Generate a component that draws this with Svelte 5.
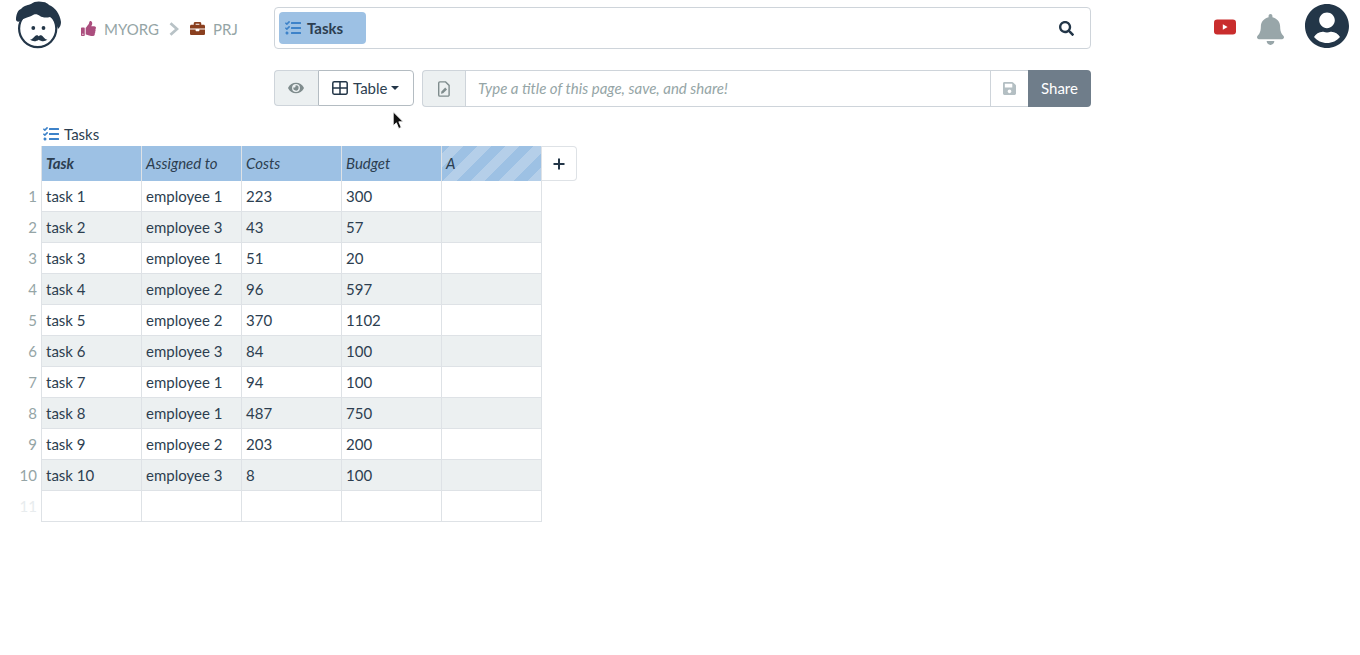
<script>
  const rows = [
    ['task 1', 'employee 1', '223', '300'],
    ['task 2', 'employee 3', '43', '57'],
    ['task 3', 'employee 1', '51', '20'],
    ['task 4', 'employee 2', '96', '597'],
    ['task 5', 'employee 2', '370', '1102'],
    ['task 6', 'employee 3', '84', '100'],
    ['task 7', 'employee 1', '94', '100'],
    ['task 8', 'employee 1', '487', '750'],
    ['task 9', 'employee 2', '203', '200'],
    ['task 10', 'employee 3', '8', '100'],
    ['', '', '', '']
  ];
  const tasks = 'M139.61 35.5a12 12 0 0 0-17 0L58.93 98.81l-22.7-22.12a12 12 0 0 0-17 0L3.53 92.41a12 12 0 0 0 0 17l47.59 47.4a12.78 12.78 0 0 0 17.61 0l15.59-15.62L156.52 69a12.09 12.09 0 0 0 .09-17zm0 159.19a12 12 0 0 0-17 0l-63.68 63.72-22.7-22.1a12 12 0 0 0-17 0L3.53 252a12 12 0 0 0 0 17L51 316.5a12.77 12.77 0 0 0 17.6 0l15.7-15.69 72.2-72.22a12 12 0 0 0 .09-16.9zM64 368c-26.49 0-48.59 21.5-48.59 48S37.53 464 64 464a48 48 0 0 0 0-96zm432 16H208a16 16 0 0 0-16 16v32a16 16 0 0 0 16 16h288a16 16 0 0 0 16-16v-32a16 16 0 0 0-16-16zm0-320H208a16 16 0 0 0-16 16v32a16 16 0 0 0 16 16h288a16 16 0 0 0 16-16V80a16 16 0 0 0-16-16zm0 160H208a16 16 0 0 0-16 16v32a16 16 0 0 0 16 16h288a16 16 0 0 0 16-16v-32a16 16 0 0 0-16-16z';
</script>

<div class="page">
  <header class="top">
    <div class="brand">
      <svg class="logo" viewBox="0 0 46 48" width="46" height="48">
        <circle cx="21.7" cy="27.6" r="18.6" fill="#fff" stroke="#233648" stroke-width="2.2" />
        <path d="M0 19C0 13 2 9 5 8C8 4 13 4 15 3C18 0 24 0 27 1C30 1 32 3 33 4C39 6 44 13 45 21C45 24 44 26 42 28C41 24 38 18 34 16C30 17 26 16.5 24 15C22 13.5 20 13 18 13.5C14 16 8 17 4 20C2.5 21 1 21 0 19Z" fill="#233648" />
        <circle cx="17.3" cy="27" r="1.9" fill="#233648" />
        <circle cx="27.5" cy="27" r="1.9" fill="#233648" />
        <path d="M14 38.6C17 38.6 18.6 34.6 20.6 34.2C21.6 34 22.2 34.6 22.8 35.2C23.4 34.6 24 34 25 34.2C27 34.6 28.4 38.6 31.4 38.6C29 40.8 25.6 40.8 22.8 38.8C20 40.8 16.6 40.8 14 38.6Z" fill="#233648" />
      </svg>
      <nav class="crumbs">
        <svg class="thumb" viewBox="0 0 512 512" width="15" height="15"><path fill="#ab4e7e" d="M104 224H24c-13.255 0-24 10.745-24 24v240c0 13.255 10.745 24 24 24h80c13.255 0 24-10.745 24-24V248c0-13.255-10.745-24-24-24zM64 472c-13.255 0-24-10.745-24-24s10.745-24 24-24 24 10.745 24 24-10.745 24-24 24zM384 81.452c0 42.416-25.97 66.208-33.277 94.548h101.723c33.397 0 59.397 27.746 59.553 58.098.084 17.938-7.546 37.249-19.439 49.197l-.11.11c9.836 23.337 8.237 56.037-9.308 79.469 8.681 25.895-.069 57.704-16.382 74.757 4.298 17.598 2.244 32.575-6.148 44.632C440.202 511.587 389.616 512 346.839 512l-2.845-.001c-48.287-.017-87.806-17.598-119.56-31.725-15.957-7.099-36.821-15.887-52.651-16.178-6.54-.12-11.783-5.457-11.783-11.998v-213.77c0-3.2 1.282-6.271 3.558-8.521 39.614-39.144 56.648-80.587 89.117-113.111 14.804-14.832 20.188-37.236 25.393-58.902C282.515 39.293 291.817 0 312 0c24 0 72 8 72 81.452z" /></svg>
        <span class="crumb">MYORG</span>
        <svg class="chev" viewBox="0 0 10 14" width="10" height="14"><path d="M1.5 1.2L8 7L1.5 12.8" fill="none" stroke="#b8c2c6" stroke-width="2.8" /></svg>
        <svg class="case" viewBox="0 0 512 512" width="15" height="15"><path fill="#8a3f1f" d="M320 336c0 8.84-7.16 16-16 16h-96c-8.84 0-16-7.16-16-16v-48H0v144c0 25.6 22.4 48 48 48h416c25.6 0 48-22.4 48-48V288H320v48zm144-208h-80V80c0-25.6-22.4-48-48-48H176c-25.6 0-48 22.4-48 48v48H48c-25.6 0-48 22.4-48 48v80h512v-80c0-25.6-22.4-48-48-48zm-144 0H192V96h128v32z" /></svg>
        <span class="crumb">PRJ</span>
      </nav>
    </div>
    <div class="search">
      <span class="tag">
        <svg viewBox="0 0 512 512" width="16" height="16"><path fill="#3d82c9" d={tasks} /></svg>
        Tasks
      </span>
      <svg class="mag" viewBox="0 0 512 512" width="15" height="15"><path fill="#233648" d="M505 442.7L405.3 343c-4.5-4.5-10.6-7-17-7H372c27.6-35.3 44-79.7 44-128C416 93.1 322.9 0 208 0S0 93.1 0 208s93.1 208 208 208c48.3 0 92.7-16.4 128-44v16.3c0 6.4 2.5 12.5 7 17l99.7 99.7c9.4 9.4 24.6 9.4 33.9 0l28.3-28.3c9.4-9.4 9.4-24.6.1-34zM208 336c-70.7 0-128-57.2-128-128 0-70.7 57.2-128 128-128 70.7 0 128 57.2 128 128 0 70.7-57.2 128-128 128z" /></svg>
    </div>
    <div class="right">
      <svg class="yt" viewBox="0 0 22 16" width="22" height="16"><rect x="0" y="0.5" width="22" height="15" rx="3.2" fill="#c92d2d" /><path d="M8.8 5.2L13.6 8L8.8 10.8Z" fill="#fff" /></svg>
      <svg class="bell" viewBox="0 0 448 512" width="27" height="31"><path fill="#98a6a9" d="M224 512c35.32 0 63.97-28.65 63.97-64H160.03c0 35.35 28.65 64 63.97 64zm215.39-149.71c-19.32-20.76-55.47-51.99-55.47-154.29 0-77.7-54.48-139.9-127.94-155.16V32c0-17.67-14.32-32-31.98-32s-31.98 14.33-31.98 32v20.84C118.56 68.1 64.08 130.3 64.08 208c0 102.3-36.15 133.53-55.47 154.29-6 6.45-8.66 14.16-8.61 21.71.11 16.4 12.98 32 32.1 32h383.8c19.12 0 32-15.6 32.1-32 .05-7.55-2.61-15.27-8.61-21.71z" /></svg>
      <svg class="user" viewBox="0 8 496 496" width="44" height="44"><path fill="#233648" d="M248 8C111 8 0 119 0 256s111 248 248 248 248-111 248-248S385 8 248 8zm0 96c48.6 0 88 39.4 88 88s-39.4 88-88 88-88-39.4-88-88 39.4-88 88-88zm0 344c-58.7 0-111.3-26.6-146.5-68.2 18.8-35.4 55.6-59.8 98.5-59.8 2.4 0 4.8.4 7.1 1.1 13 4.2 26.6 6.9 40.9 6.9 14.3 0 28-2.7 40.9-6.9 2.3-.7 4.7-1.1 7.1-1.1 42.9 0 79.7 24.4 98.5 59.8C359.3 421.4 306.7 448 248 448z" /></svg>
    </div>
  </header>

  <div class="tools">
    <div class="group view">
      <span class="addon eye">
        <svg viewBox="0 0 576 512" width="16" height="14"><path fill="#7f8c8d" d="M572.52 241.4C518.29 135.59 410.93 64 288 64S57.68 135.64 3.48 241.41a32.35 32.35 0 0 0 0 29.19C57.71 376.41 165.07 448 288 448s230.32-71.64 284.52-177.41a32.35 32.35 0 0 0 0-29.19zM288 400a144 144 0 1 1 144-144 143.93 143.93 0 0 1-144 144zm0-240a95.31 95.31 0 0 0-25.31 3.79 47.85 47.85 0 0 1-66.9 66.9A95.78 95.78 0 1 0 288 160z" /></svg>
      </span>
      <span class="table-btn">
        <svg viewBox="0 0 16 14" width="16" height="14"><path d="M2.2.8H13.8A1.4 1.4 0 0 1 15.2 2.2V11.8A1.4 1.4 0 0 1 13.8 13.2H2.2A1.4 1.4 0 0 1 .8 11.8V2.2A1.4 1.4 0 0 1 2.2.8ZM8 .8V13.2M.8 7H15.2" fill="none" stroke="#233648" stroke-width="1.5" /></svg>
        Table
        <i class="caret"></i>
      </span>
    </div>
    <div class="group title">
      <span class="addon doc">
        <svg viewBox="0 0 12 16" width="12" height="16"><path d="M1.9 .9H7.6L11.1 4.4V13.9A1.2 1.2 0 0 1 9.9 15.1H1.9A1.2 1.2 0 0 1 .7 13.9V2.1A1.2 1.2 0 0 1 1.9 .9Z" fill="none" stroke="#7f8c8d" stroke-width="1.4" /><path d="M3 12.8L3.4 10.4L7.2 6.6L9 8.4L5.2 12.2Z" fill="#7f8c8d" /></svg>
      </span>
      <span class="field">Type a title of this page, save, and share!</span>
      <span class="savebox">
        <svg viewBox="0 0 448 512" width="13" height="15"><path fill="#b4bfc3" d="M433.941 129.941l-83.882-83.882A48 48 0 0 0 316.118 32H48C21.49 32 0 53.49 0 80v352c0 26.51 21.49 48 48 48h352c26.51 0 48-21.49 48-48V163.882a48 48 0 0 0-14.059-33.941zM224 416c-35.346 0-64-28.654-64-64 0-35.346 28.654-64 64-64s64 28.654 64 64c0 35.346-28.654 64-64 64zm96-304.52V212c0 6.627-5.373 12-12 12H76c-6.627 0-12-5.373-12-12V108c0-6.627 5.373-12 12-12h228.52c3.183 0 6.235 1.264 8.485 3.515l3.48 3.48A11.996 11.996 0 0 1 320 111.48z" /></svg>
      </span>
      <span class="share">Share</span>
    </div>
  </div>

  <section class="sheet">
    <div class="caption">
      <svg viewBox="0 0 512 512" width="16" height="16"><path fill="#3d82c9" d={tasks} /></svg>
      Tasks
    </div>
    <div class="grid">
      <div class="num head"></div>
      <div class="cell th strong">Task</div>
      <div class="cell th">Assigned to</div>
      <div class="cell th">Costs</div>
      <div class="cell th">Budget</div>
      <div class="cell th striped">A</div>
      <div class="add"><svg viewBox="0 0 12 12" width="12" height="12"><path d="M6 .5v11M.5 6h11" stroke="#233648" stroke-width="2" /></svg></div>

      {#each rows as r, i}
        <div class="num" class:faint={i === 10}>{i + 1}</div>
        {#each [...r, ''] as v}
          <div class="cell" class:alt={i % 2 === 1}>{v}</div>
        {/each}
        <div></div>
      {/each}
    </div>
  </section>

  <svg class="cursor" viewBox="0 0 12 18" width="13" height="19"><path d="M1 .8V14L4 11.2L6.2 16.6L8.6 15.6L6.3 10.2H10.4Z" fill="#111" stroke="#fff" stroke-width=".8" /></svg>
</div>

<style>
  :global(body) {
    margin: 0;
    background: #fff;
    color: #2c3e50;
    font-family: Lato, "Open Sans", sans-serif;
    font-size: 15px;
  }
  .page {
    position: relative;
    width: 1360px;
    height: 655px;
    overflow: hidden;
  }
  svg { display: block; flex: none; }
  .top {
    display: flex;
    align-items: flex-start;
  }
  .brand {
    width: 274px;
    display: flex;
    align-items: flex-start;
    padding: 1px 0 0 16px;
    box-sizing: border-box;
  }
  .crumbs {
    display: flex;
    align-items: center;
    margin: 19px 0 0 19px;
    height: 17px;
    color: #95a5a6;
  }
  .crumb { font-size: 15px; }
  .thumb { margin-right: 8px; }
  .chev { margin: 0 11px 0 10px; }
  .case { margin-right: 8px; }
  .search {
    margin-top: 7px;
    width: 817px;
    height: 42px;
    box-sizing: border-box;
    border: 1px solid #ced4da;
    border-radius: 4px;
    padding: 4px;
    display: flex;
    align-items: center;
    justify-content: space-between;
  }
  .tag {
    width: 87px;
    height: 32px;
    box-sizing: border-box;
    background: #9dc1e4;
    border-radius: 4px;
    display: flex;
    align-items: center;
    gap: 6px;
    padding-left: 6px;
    font-weight: 700;
    font-size: 15px;
  }
  .mag { margin-right: 12px; }
  .right {
    display: flex;
    align-items: flex-start;
    margin-left: 123px;
  }
  .yt { margin: 19px 0 0 0; }
  .bell { margin: 14px 0 0 21px; }
  .user { margin: 4px 0 0 21px; }
  .tools {
    display: flex;
    gap: 8px;
    margin: 21px 0 0 274px;
    width: 817px;
  }
  .group {
    display: flex;
    height: 37px;
    box-sizing: border-box;
  }
  .view { width: 140px; height: 36px; }
  .title { flex: 1; }
  .addon {
    background: #ecf0f1;
    border: 1px solid #ced4da;
    border-radius: 4px 0 0 4px;
    display: flex;
    align-items: center;
    justify-content: center;
    box-sizing: border-box;
  }
  .eye { width: 44px; border-right: 0; padding-right: 2px; }
  .doc { width: 43px; border-right: 0; }
  .table-btn {
    flex: 1;
    display: flex;
    align-items: center;
    gap: 5px;
    padding-left: 13px;
    border: 1px solid #b4bcc2;
    border-radius: 0 4px 4px 0;
  }
  .caret {
    width: 0;
    height: 0;
    border-left: 4.5px solid transparent;
    border-right: 4.5px solid transparent;
    border-top: 4.5px solid #233648;
    margin-left: -1px;
  }
  .field {
    flex: 1;
    display: flex;
    align-items: center;
    padding: 0 0 2px 12px;
    box-sizing: border-box;
    border: 1px solid #ced4da;
    border-right: 0;
    color: #95a5a6;
    font-style: italic;
    font-size: 15px;
  }
  .savebox {
    width: 38px;
    box-sizing: border-box;
    display: flex;
    align-items: center;
    justify-content: center;
    border: 1px solid #ced4da;
    border-right: 0;
  }
  .share {
    width: 63px;
    display: flex;
    align-items: center;
    justify-content: center;
    padding-bottom: 2px;
    box-sizing: border-box;
    background: #6f7d8a;
    color: #fff;
    border-radius: 0 4px 4px 0;
  }
  .sheet { margin-top: 17px; }
  .caption {
    display: flex;
    align-items: center;
    gap: 5px;
    margin-left: 43px;
    height: 22px;
    padding-bottom: 2px;
    box-sizing: border-box;
    font-size: 15px;
  }
  .grid {
    display: grid;
    grid-template-columns: 41px 101px 100px 100px 100px 100px 35px;
    grid-auto-rows: 31px;
    grid-template-rows: 35px;
  }
  .num {
    text-align: right;
    padding-right: 4px;
    line-height: 31px;
    color: #95a5a6;
  }
  .num.faint { color: #e8ecee; }
  .cell {
    box-sizing: border-box;
    border-right: 1px solid #dee2e6;
    border-bottom: 1px solid #dee2e6;
    padding-left: 4px;
    line-height: 30px;
    white-space: nowrap;
  }
  .cell:nth-child(7n + 2) { border-left: 1px solid #dee2e6; }
  .alt { background: #ecf0f1; }
  .th {
    background: #9dc1e4;
    border-color: #dee2e6;
    font-style: italic;
    line-height: 35px;
    border-bottom: 0;
  }
  .strong { font-weight: 700; }
  .striped {
    background: repeating-linear-gradient(135deg, #9dc1e4 0 5px, #b5cfe9 5px 15px, #9dc1e4 15px 20px);
  }
  .add {
    box-sizing: border-box;
    border: 1px solid #dee2e6;
    border-left: 0;
    border-radius: 0 4px 4px 0;
    display: flex;
    align-items: center;
    justify-content: center;
  }
  .cursor {
    position: absolute;
    left: 392px;
    top: 111px;
  }
</style>
